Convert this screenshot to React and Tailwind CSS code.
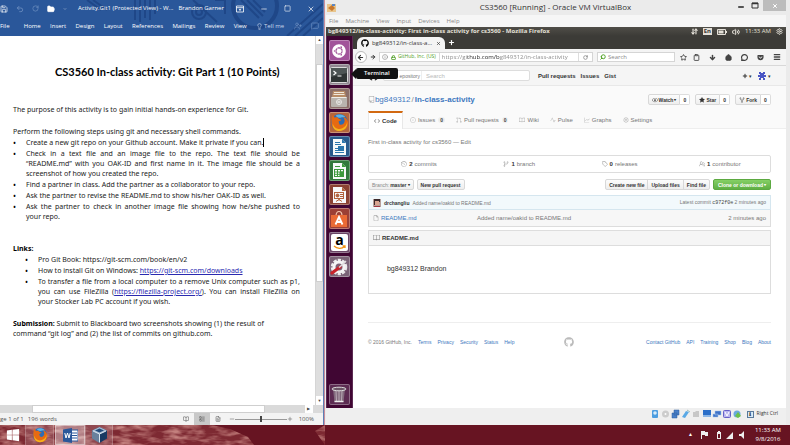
import React from "react";
import { FaUbuntu, FaWindows, FaGithub, FaGetPocket } from "react-icons/fa";
import { GoRepo, GoCode, GoIssueOpened, GoGitPullRequest, GoBook, GoPulse, GoGraph, GoGear, GoHistory, GoGitBranch, GoTag, GoPeople, GoEye, GoStarFill, GoRepoForked, GoFile } from "react-icons/go";
import { Save, Undo2, RotateCw, FolderOpen, ChevronDown, Lightbulb, UserPlus, MessageSquare, X, Square, Minus, Menu, Star, Clipboard, ArrowDown, House, MessageCircle, Info, Lock, ArrowLeft, ArrowRight, Search, Settings, Volume2, ArrowDownUp, BookOpen, LayoutList, FileText, Plus } from "lucide-react";

const ribbonTabs = ["File", "Home", "Insert", "Design", "Layout", "References", "Mailings", "Review", "View"];

function RibbonPattern() {
  return (
    <svg className="absolute right-0 top-0 h-full w-60" viewBox="0 0 240 36" fill="none" stroke="#1f4788" aria-hidden="true">
      <g strokeWidth="2">
        <path d="M4 0l14 10M10 0l14 10M52 0v20M57 0v22M62 0v18M67 0v20M72 0v14" />
        <circle cx="116" cy="12" r="7" />
        <circle cx="116" cy="12" r="3" />
        <path d="M110 0l24 22M132 0h10v14" />
      </g>
      <circle cx="172" cy="6" r="22" strokeWidth="4" />
      <path d="M158 0l18 18M164 0l16 16M170 0l12 12" strokeWidth="2" />
      <path d="M204 36L240 4M212 36l28-25M220 36l20-18" strokeWidth="2" />
    </svg>
  );
}

function WordHeader() {
  return (
    <header className="relative flex h-[36px] shrink-0 flex-col bg-[#2a579a] text-[6px] text-white">
      <RibbonPattern />
      <div className="relative flex h-[17px] items-center pr-2">
        <div className="flex w-[78px] items-center gap-2">
          <button aria-label="Save"><Save size={8} /></button>
          <button aria-label="Undo" className="text-[#7d9cc9]"><Undo2 size={8} /></button>
          <button aria-label="Redo" className="text-[#7d9cc9]"><RotateCw size={7} /></button>
          <button aria-label="Open"><FolderOpen size={8} fill="white" /></button>
          <button aria-label="Customize"><ChevronDown size={4} /></button>
        </div>
        <h1>Activity.Git1 (Protected View) - W...</h1>
        <span className="ml-auto">Brandon Garner</span>
        <div className="ml-3 flex items-center gap-4">
          <button aria-label="Ribbon options">
            <svg width="8" height="8" viewBox="0 0 8 8" fill="none" stroke="white" strokeWidth=".8"><path d="M.5 1h7v6h-7zM.5 2.700h7M4 6V4M3 4.900l1-1 1 1" /></svg>
          </button>
          <button aria-label="Minimize"><Minus size={8} /></button>
          <button aria-label="Maximize"><Square size={7} /></button>
          <button aria-label="Close"><X size={8} /></button>
        </div>
      </div>
      <nav className="relative flex h-[18px] items-center justify-between pr-1">
        {ribbonTabs.map((t) => <button key={t} className="first:mr-[5px]">{t}</button>)}
        <button className="flex items-center gap-px text-[#c9d6ea]"><Lightbulb size={7} />Tell me</button>
        <button aria-label="Share" className="text-[#6f92c4]"><UserPlus size={8} /></button>
        <button aria-label="Comments" className="text-[#6f92c4]"><MessageSquare size={8} /></button>
      </nav>
    </header>
  );
}

function Line({ children }) {
  return <span className="block whitespace-nowrap [text-align-last:justify]">{children}</span>;
}

function Bullet({ children }) {
  return (
    <li className="flex">
      <span className="w-[13px] shrink-0 text-[8px] text-black">•</span>
      <div className="min-w-0 flex-1 whitespace-nowrap">{children}</div>
    </li>
  );
}

function WordDocument() {
  return (
    <article className="min-w-0 flex-1 overflow-hidden bg-white pl-[13px] pr-[15px] pt-[30px] font-['Noto_Sans','Open_Sans',sans-serif] text-[7px] leading-[10px] text-[#222]">
      <h2 className="ml-[42px] whitespace-nowrap font-['Lato',sans-serif] text-[11px] font-bold leading-[12px] text-black">CS3560 In-class activity: Git Part 1 (10 Points)</h2>
      <p className="mt-[27px]">The purpose of this activity is to gain initial hands-on experience for Git.</p>
      <p className="mt-[12px]">Perform the following steps using git and necessary shell commands.</p>
      <ul className="mt-px flex flex-col gap-px">
        <Bullet>Create a new git repo on your Github account. Make it private if you can.<span className="border-l border-black" /></Bullet>
        <Bullet>
          <Line>Check in a text file and an image file to the repo. The text file should be</Line>
          <Line>“README.md” with you OAK-ID and first name in it. The image file should be a</Line>
          screenshot of how you created the repo.
        </Bullet>
        <Bullet>Find a partner in class. Add the partner as a collaborator to your repo.</Bullet>
        <Bullet>Ask the partner to revise the README.md to show his/her OAK-ID as well.</Bullet>
        <Bullet>
          <Line>Ask the partner to check in another image file showing how he/she pushed to</Line>
          your repo.
        </Bullet>
      </ul>
      <h3 className="mt-[22px] font-bold text-black">Links:</h3>
      <ul className="ml-[12px] mt-px flex flex-col gap-px">
        <Bullet>Pro Git Book: https://git-scm.com/book/en/v2</Bullet>
        <Bullet>How to install Git on Windows: <a href="#downloads" className="text-[#2a2ab0] underline">https://git-scm.com/downloads</a></Bullet>
        <Bullet>
          <Line>To transfer a file from a local computer to a remove Unix computer such as p1,</Line>
          <Line>you can use FileZilla (<a href="#filezilla" className="text-[#2a2ab0] underline">https://filezilla-project.org/</a>). You can install FileZilla on</Line>
          your Stocker Lab PC account if you wish.
        </Bullet>
      </ul>
      <p className="mt-[12px]"><b className="text-black">Submission:</b> Submit to Blackboard two screenshots showing (1) the result of<br />command “git log” and (2) the list of commits on github.com.</p>
    </article>
  );
}

function WordWindow() {
  return (
    <section className="flex w-[41%] shrink-0 flex-col border-r border-[#5b7fb5] bg-white font-['Open_Sans',sans-serif]">
      <WordHeader />
      <div className="flex flex-1">
        <WordDocument />
        <div className="flex w-[8px] shrink-0 flex-col border-l border-[#d5d5d5] bg-[#dedede]">
          <span className="h-[8px] bg-white text-center text-[4px] leading-[8px] text-[#444]">▲</span>
          <span className="h-[20px]" />
          <span className="h-[218px] border border-[#cfcfcf] bg-white" />
          <span className="flex-1" />
          <span className="h-[9px] bg-white text-center text-[4px] leading-[9px] text-[#444]">▼</span>
        </div>
      </div>
      <div className="flex h-[8px] shrink-0 items-stretch bg-[#dadada]">
        <span className="w-[10%]" />
        <span className="w-[72%] border border-[#cfcfcf] bg-white" />
        <span className="ml-auto mr-[10px] w-[8px] bg-white text-center text-[4px] leading-[8px] text-[#444]">▶</span>
      </div>
      <footer className="flex h-[12px] shrink-0 items-center bg-[#f3f3f3] pr-[9px] text-[6px] leading-[8px] text-[#555]">
        <span>ge 1 of 1</span>
        <span className="ml-1">196 words</span>
        <div className="ml-auto flex items-center">
          <button aria-label="Read mode" className="px-[5px]"><BookOpen size={6} /></button>
          <button aria-label="Print layout" className="bg-[#c8c8c8] px-[5px] py-[3px]"><LayoutList size={6} /></button>
          <button aria-label="Web layout" className="px-[5px]"><FileText size={6} /></button>
          <Minus size={6} className="ml-[3px]" />
          <input type="range" aria-label="Zoom" defaultValue="50" className="h-[6px] w-[52px] appearance-none bg-[linear-gradient(#999,#999)] bg-[length:100%_1px] bg-center bg-no-repeat [&::-webkit-slider-thumb]:h-[6px] [&::-webkit-slider-thumb]:w-[2px] [&::-webkit-slider-thumb]:appearance-none [&::-webkit-slider-thumb]:bg-[#444]" />
          <Plus size={6} />
          <span className="ml-[6px]">100%</span>
        </div>
      </footer>
    </section>
  );
}

function FirefoxLogo({ size }) {
  return (
    <svg width={size} height={size} viewBox="0 0 20 20" aria-hidden="true">
      <circle cx="10" cy="10" r="9" fill="#2d6cb5" />
      <path d="M6 2.500C9 1 13 1 16 4c-1 1-3 0-5 1-3 0-4-1-5-2.500z" fill="#5cb3e6" />
      <path d="M2 5l1-3 2 3c2-1 4 0 4 1l3 1c0 1-2 1-3 2l1 3c2 1 4 0 5-2 1-2 0-4-1-6 3 1 4 3 5 5 1 6-3 10-9 10C4 19 0 14 2 5z" fill="#e66a12" />
      <path d="M3 11c1 5 6 7 10 5 3-1 5-4 5-7 1 6-3 10-8 10-5 0-8-4-7-8z" fill="#f6b21b" />
    </svg>
  );
}

function FilesIcon() {
  return (
    <svg width="18" height="18" viewBox="0 0 18 18">
      <path d="M3 1h12l1 6H2z" fill="#b98d68" /><path d="M4 2.500h10M3.500 4.500h11" stroke="#f0e8dc" />
      <rect x="1" y="7" width="16" height="10" rx="1" fill="#b9b4ae" /><path d="M1.500 7.500h15" stroke="#efede9" />
      <circle cx="9" cy="12" r="2.500" fill="none" stroke="#e9e7e4" /><path d="M7.500 12h3" stroke="#fff" />
    </svg>
  );
}

function TerminalIcon() {
  return (
    <svg width="18" height="18" viewBox="0 0 18 18">
      <rect x=".5" y="1.500" width="17" height="15" rx="1" fill="#2e3434" stroke="#d9d9d9" />
      <path d="M1 2h16v5L1 11z" fill="#4d5555" /><path d="M3.500 5l2.500 2-2.500 2M7.500 10h4" stroke="#fff" fill="none" strokeWidth="1.200" />
    </svg>
  );
}

function OfficeIcon({ color, kind }) {
  return (
    <svg width="18" height="18" viewBox="0 0 18 18">
      <path d="M3 1h9l4 4v12H3z" fill="#f7f9fa" /><path d="M12 1l4 4h-4z" fill={color} />
      {kind === "writer" && <g stroke={color}><path d="M5 4.500h5M5 6.500h6M5 14.500h9M5 12.500h3M5 10.500h3" /><rect x="8.500" y="8.500" width="5" height="4" fill={color} /></g>}
      {kind === "calc" && <g stroke={color} fill="none"><rect x="4.500" y="7.500" width="9" height="7" /><path d="M4.500 10h9M4.500 12.300h9M7.500 7.500v7M10.500 7.500v7M5 4.500h5" /><path d="M10 10h3v4h-3z" fill={color} /></g>}
      {kind === "impress" && <g stroke={color} fill="none"><rect x="4.500" y="6.500" width="9" height="6" /><circle cx="7.500" cy="9.500" r="1.500" fill={color} /><path d="M10 8.500h3M10 10.500h3M9 12.500v2M6 15.500l3-2 3 2" /></g>}
    </svg>
  );
}

function SoftwareIcon() {
  return (
    <svg width="18" height="18" viewBox="0 0 18 18">
      <path d="M6 6c0-6 6-6 6 0" fill="none" stroke="#f3c7ae" strokeWidth="1.200" />
      <path d="M1 5h16v12H1z" fill="#ea6a35" /><path d="M5.500 14.500L9 7l3.500 7.500M6 12h6" fill="none" stroke="#fff" strokeWidth="1.800" />
    </svg>
  );
}

function AmazonIcon() {
  return (
    <span className="flex size-[17px] flex-col items-center rounded-xs bg-white text-[14px] font-bold leading-[11px] text-black">
      a
      <svg width="13" height="5" viewBox="0 0 13 5" fill="none" stroke="#f29111"><path d="M1 1c3 3 8 3 10.500.5M9.500.8h2.500v2.200" strokeWidth="1.300" /></svg>
    </span>
  );
}

function SettingsIcon() {
  return (
    <svg width="18" height="18" viewBox="0 0 18 18">
      <circle cx="9" cy="9" r="6.500" fill="none" stroke="#ececec" strokeWidth="3.500" strokeDasharray="3 1.100" />
      <circle cx="9" cy="9" r="5" fill="none" stroke="#f5f5f5" strokeWidth="3" />
      <path d="M2 15l8-6" stroke="#c9232b" strokeWidth="3.200" strokeLinecap="round" /><path d="M9 9.500l4-3.500 3-3" stroke="#ddd" strokeWidth="1.600" />
    </svg>
  );
}

function TrashIcon() {
  return (
    <svg width="18" height="18" viewBox="0 0 18 18">
      <path d="M3 3h12l-1.500 13h-9z" fill="#8c7a88" opacity=".8" /><path d="M6 5l.5 10M9 5v10M12 5l-.5 10" stroke="#b8a9b5" />
      <ellipse cx="9" cy="3" rx="7" ry="1.800" fill="#6b5466" stroke="#ddd" /><path d="M4.500 15.500h9" stroke="#eee" strokeWidth="1.500" />
    </svg>
  );
}

const launcher = [
  { name: "Dash", bg: "bg-[#a1539a]", icon: <FaUbuntu size={14} color="white" /> },
  { name: "Terminal", bg: "bg-[#8f8790]", icon: <TerminalIcon />, tip: true },
  { name: "Files", bg: "bg-[#8c6f69]", icon: <FilesIcon /> },
  { name: "Firefox", bg: "bg-[#b5653c]", icon: <FirefoxLogo size={19} /> },
  { name: "Writer", bg: "bg-[#285a8c]", icon: <OfficeIcon color="#2a76ad" kind="writer" /> },
  { name: "Calc", bg: "bg-[#32793c]", icon: <OfficeIcon color="#3c9a3c" kind="calc" /> },
  { name: "Impress", bg: "bg-[#8b4233]", icon: <OfficeIcon color="#b3623c" kind="impress" /> },
  { name: "Software", bg: "bg-[#9c3f35]", icon: <SoftwareIcon /> },
  { name: "Amazon", bg: "bg-[#6a4566]", icon: <AmazonIcon /> },
  { name: "System settings", bg: "bg-[#7a6377]", icon: <SettingsIcon /> },
];

function Launcher() {
  return (
    <nav className="flex w-[27px] shrink-0 flex-col items-center gap-[3px] border-x border-[#5b2a52] bg-[#400633] pb-[3px] pt-[4px]">
      {launcher.map((l) => (
        <div key={l.name} className="relative">
          <button aria-label={l.name} className={"flex size-[21px] items-center justify-center rounded-xs border border-white/30 " + l.bg}>{l.icon}</button>
          {l.tip && (
            <span role="tooltip" className="absolute left-[22px] top-[4px] z-10 flex items-center">
              <span className="border-y-[5px] border-r-[5px] border-y-transparent border-r-[#111]" />
              <span className="rounded-xs bg-[#111] px-[8px] text-[6px] leading-[11px] font-semibold text-white">Terminal</span>
            </span>
          )}
        </div>
      ))}
      <button aria-label="Trash" className="mt-auto flex size-[21px] items-center justify-center rounded-xs border border-white/30 bg-[#5c2b52]"><TrashIcon /></button>
    </nav>
  );
}

function FirefoxToolbar() {
  return (
    <>
      <div className="flex h-[13px] shrink-0 items-end bg-[#3c3b37] pl-[4px]">
        <div className="flex h-[12px] w-[88px] items-center gap-[3px] rounded-t-md bg-[#f4f4f4] px-[4px] text-[6px] text-[#333]">
          <FaGithub size={8} className="shrink-0 text-black" />
          <span className="min-w-0 whitespace-nowrap">bg849312/in-class-a...</span>
          <button aria-label="Close tab" className="ml-auto"><X size={5} strokeWidth={3} /></button>
        </div>
        <button aria-label="New tab" className="ml-[3px] mb-[3px] text-white"><Plus size={7} strokeWidth={4} /></button>
      </div>
      <div className="flex h-[17px] shrink-0 items-center border-b border-[#d8d8d8] bg-[#f4f4f4] pl-[2px] pr-[5px] text-[6px] text-[#777]">
        <button aria-label="Back" className="flex size-[12px] items-center justify-center rounded-full border border-[#bbb] bg-white text-[#333]"><ArrowLeft size={7} strokeWidth={4} /></button>
        <button aria-label="Forward" className="flex h-[10px] w-[12px] items-center justify-center text-[#333]"><ArrowRight size={6} strokeWidth={4} /></button>
        <div className="flex h-[10px] flex-1 items-center border border-[#d5d5d5] bg-white pl-[2px]">
          <Info size={6} />
          <Lock size={5} strokeWidth={4} className="ml-[3px] text-[#4f9e24]" />
          <span className="ml-[2px] whitespace-nowrap text-[5px] text-[#4f9e24]">GitHub, Inc. (US)</span>
          <input aria-label="Address" defaultValue="https://github.com/bg849312/in-class-activity" className="ml-[3px] w-0 min-w-0 flex-1 border-l border-[#ddd] bg-[linear-gradient(to_right,#888_27px,#222_27px,#222_60px,#888_60px)] bg-clip-text pl-[2px] text-transparent outline-none" />
          <button aria-label="Reload" className="flex h-full w-[14px] items-center justify-center border-l border-[#ddd]"><RotateCw size={5} strokeWidth={3} /></button>
        </div>
        <label className="ml-[4px] flex h-[10px] w-[78px] items-center border border-[#d5d5d5] bg-white pl-[2px]">
          <Search size={6} strokeWidth={4} className="-scale-x-100 text-[#57a52c]" />
          <input aria-label="Search the web" placeholder="Search" className="ml-[2px] w-0 flex-1 outline-none placeholder:text-[#888]" />
        </label>
        <div className="ml-[5px] flex items-center gap-[9px] text-[#444]">
          <button aria-label="Bookmark"><Star size={7} strokeWidth={3} /></button>
          <button aria-label="Library" className="-ml-[3px]"><Clipboard size={7} strokeWidth={3} /></button>
          <button aria-label="Downloads"><ArrowDown size={7} strokeWidth={5} /></button>
          <button aria-label="Home"><House size={7} strokeWidth={3} fill="#444" /></button>
          <button aria-label="Chat"><MessageCircle size={7} strokeWidth={4} /></button>
          <button aria-label="Pocket"><FaGetPocket size={7} /></button>
          <button aria-label="Menu"><Menu size={8} strokeWidth={4} /></button>
        </div>
      </div>
    </>
  );
}

const btn = "flex h-[11px] items-center gap-px border border-[#d8d8d8] bg-gradient-to-b from-[#fcfcfc] to-[#eee] px-[3px] text-[5px] font-bold text-[#333] whitespace-nowrap";

function CountButton({ icon, label, caret }) {
  return (
    <div className="flex">
      <button className={btn + " rounded-l-xs"}>{icon}{label}{caret && <span className="text-[4px]">▾</span>}</button>
      <a href="#count" className="flex h-[11px] w-[10px] items-center justify-center rounded-r-xs border border-l-0 border-[#ddd] bg-white text-[5px] font-bold text-[#333]">0</a>
    </div>
  );
}

const repoTabs = [
  [GoIssueOpened, "Issues", true],
  [GoGitPullRequest, "Pull requests", true],
  [GoBook, "Wiki", false],
  [GoPulse, "Pulse", false],
  [GoGraph, "Graphs", false],
  [GoGear, "Settings", false],
];

const stats = [
  [GoHistory, "2", "commits"],
  [GoGitBranch, "1", "branch"],
  [GoTag, "0", "releases"],
  [GoPeople, "1", "contributor"],
];

function GitHubPage() {
  return (
    <div className="flex flex-1 flex-col bg-white font-['Liberation_Sans',Arial,sans-serif] text-[6px] leading-[8px] text-[#777]">
      <header className="flex h-[20px] shrink-0 items-center border-b border-[#e8e8e8] bg-[#f5f5f5] px-[15px] text-[#333]">
        <FaGithub size={11} />
        <div className="ml-[4px] flex h-[11px] w-[147px] rounded-xs border border-[#ddd] bg-white">
          <span className="flex w-[38px] items-center justify-end whitespace-nowrap border-r border-[#eee] pr-px text-[5px] text-[#777]">epository</span>
          <input aria-label="Search GitHub" placeholder="Search" className="w-0 flex-1 pl-[4px] outline-none placeholder:text-[#bbb]" />
        </div>
        <nav className="ml-[8px] flex gap-[5px] font-bold">
          <a href="#pulls">Pull requests</a><a href="#issues">Issues</a><a href="#gist">Gist</a>
        </nav>
        <button aria-label="Create new" className="ml-auto flex items-center gap-px"><Plus size={6} strokeWidth={4} /><span className="text-[5px]">▾</span></button>
        <button aria-label="Profile" className="ml-[6px] flex items-center gap-[2px]">
          <svg width="8" height="8" viewBox="0 0 8 8" fill="#4a55c4"><path d="M1 0h2v1h2V0h2v2H6v1h2v2H6v1h1v2H5V6H3v2H1V6h1V5H0V3h2V2H1z" /></svg>
          <span className="text-[5px]">▾</span>
        </button>
      </header>

      <section className="flex h-[43px] shrink-0 flex-col border-b border-[#eee] bg-[#fafafa] px-[15px]">
        <div className="flex items-center pt-[8px]">
          <GoRepo size={7} className="text-[#999]" />
          <h1 className="flex gap-px text-[8px] leading-[11px] text-[#4078c0]"><a href="#owner">bg849312</a><span className="text-[#888]">/</span><a href="#repo" className="font-bold">In-class-activity</a></h1>
          <div className="ml-auto flex gap-[5px]">
            <CountButton icon={<GoEye size={6} />} label="Watch" caret />
            <CountButton icon={<GoStarFill size={6} />} label="Star" />
            <CountButton icon={<GoRepoForked size={6} />} label="Fork" />
          </div>
        </div>
        <nav className="mt-auto flex h-[17px] items-center gap-[11px]">
          <a href="#code" className="relative -mb-px flex h-[18px] w-[35px] items-center justify-center gap-[2px] border border-b-0 border-t-2 border-[#e8e8e8] border-t-[#d26911] bg-white font-bold text-[#333] -mr-[4px]"><GoCode size={6} />Code</a>
          {repoTabs.map(([Icon, label, count]) => (
            <a href="#tab" key={label} className="flex items-center gap-[2px]"><Icon size={6} className="text-[#aaa]" />{label}{count && <b className="ml-px rounded-full bg-[#eee] px-[2px] text-[5px] leading-[6px] text-[#444]">0</b>}</a>
          ))}
        </nav>
      </section>

      <main className="flex-1 px-[15px] pt-[9px]">
        <p>First in-class activity for cs3560 — <a href="#edit">Edit</a></p>
        <ul className="mt-[9px] grid h-[18px] grid-cols-4 items-center rounded-xs border border-[#ddd]">
          {stats.map(([Icon, n, label]) => (
            <li key={label} className="flex items-center justify-center gap-[2px]"><Icon size={6} className="text-[#888]" /><b className="text-[#333]">{n}</b>{label}</li>
          ))}
        </ul>
        <div className="mt-[6px] flex">
          <button className={btn + " rounded-xs"}><span className="font-normal text-[#888]">Branch:</span>master <span className="text-[4px]">▾</span></button>
          <button className={btn + " ml-[3px] rounded-xs"}>New pull request</button>
          <button className={btn + " ml-auto rounded-l-xs"}>Create new file</button>
          <button className={btn + " -ml-px"}>Upload files</button>
          <button className={btn + " -ml-px rounded-r-xs"}>Find file</button>
          <button className="ml-[3px] flex h-[11px] items-center gap-px rounded-xs border border-[#5ca941] bg-gradient-to-b from-[#85cf66] to-[#60b044] px-[4px] text-[5px] font-bold text-white">Clone or download <span className="text-[4px]">▾</span></button>
        </div>
        <div className="mt-[5px] flex h-[15px] items-center gap-[3px] border border-[#d5e6ef] bg-[#f2f9fc] px-[4px] text-[5px]">
          <svg width="8" height="8" viewBox="0 0 8 8"><path fill="#b8a09b" d="M0 0h8v8H0z" /><path fill="#3b2a2c" d="M1 0h6v3H1zM1 2h1v4H1z" /><path fill="#d9a692" d="M2 2h4v4H2z" /><path fill="#a33742" d="M1 7h6v1H1z" /></svg>
          <a href="#author" className="font-bold text-[#333]">drchangliu</a>
          <a href="#message">Added name/oakid to README.md</a>
          <span className="ml-auto">Latest commit <a href="#hash" className="font-['Liberation_Mono',monospace] text-[#444]">c972f0e</a> 2 minutes ago</span>
        </div>
        <table className="w-full border border-t-0 border-[#ddd] bg-[#f7f7f7]">
          <tbody><tr className="h-[16px]">
            <td className="w-[27%] pl-[4px]"><a href="#file" className="flex items-center gap-[2px] text-[#4078c0]"><GoFile size={6} className="text-[#888]" />README.md</a></td>
            <td>Added name/oakid to README.md</td>
            <td className="pr-[4px] text-right">2 minutes ago</td>
          </tr></tbody>
        </table>
        <article className="mt-[3px] border border-[#ddd]">
          <h2 className="flex h-[15px] items-center gap-[2px] border-b border-[#ddd] bg-[#f5f5f5] px-[4px] font-bold text-[#333]"><GoBook size={7} className="text-[#777]" />README.md</h2>
          <p className="flex h-[47px] items-center px-[18px] text-[7px] text-[#333]">bg849312 Brandon</p>
        </article>
        <footer className="mt-[28px] grid grid-cols-[1fr_auto_1fr] items-center border-t border-[#eee] pt-[14px] text-[5px] text-[#4078c0]">
          <div className="flex gap-[6px]"><span className="text-[#777]">© 2016 GitHub, Inc.</span>{["Terms", "Privacy", "Security", "Status", "Help"].map((t) => <a href="#footer" key={t}>{t}</a>)}</div>
          <FaGithub size={10} className="text-[#bbb]" />
          <div className="flex justify-end gap-[6px]">{["Contact GitHub", "API", "Training", "Shop", "Blog", "About"].map((t) => <a href="#footer" key={t}>{t}</a>)}</div>
        </footer>
      </main>
    </div>
  );
}

function VmStatusIcons() {
  return (
    <svg width="94" height="10" viewBox="0 0 94 10" aria-hidden="true">
      <rect x="1" y="1" width="6" height="8" rx="1" fill="#4d9de0" /><circle cx="4" cy="4" r="1.800" fill="#d6ebfa" />
      <circle cx="14.500" cy="5" r="3.500" fill="#ccc" /><circle cx="14.500" cy="5" r="1" fill="#fff" />
      <path d="M23 1h5v5h-5zM21 4h5v5h-5z" fill="#4a80c8" stroke="#2e5d9e" strokeWidth=".5" />
      <path d="M31 8l4-6 3 1-4 6z" fill="#5aa9e6" /><path d="M36 1l3 2" stroke="#9bb" />
      <path d="M42 3h2l1-1h3v6h-6z" fill="#c7c7c7" />
      <path d="M52 1h8v5h-8z" fill="#2b6fc9" /><path d="M52 6h8v2h-8z" fill="#8db7e6" />
      <path d="M64 2h6v4h-6zM62 5h5v3h-5z" fill="#3e71c7" stroke="#9fc0ea" strokeWidth=".5" />
      <rect x="72.500" y="1.500" width="7" height="7" rx="1" fill="#b9b6ef" stroke="#6660c8" /><path d="M74 3l2 4 2-4" stroke="#fff" fill="none" />
      <circle cx="86" cy="5" r="3.500" fill="#6aa9df" /><path d="M84 7l3-4 3 4-3 2z" fill="#6cc04a" />
    </svg>
  );
}

function VmWindow() {
  return (
    <section className="flex min-w-0 flex-1 flex-col bg-[#ebebeb] pl-px pr-[4px] font-['Open_Sans',sans-serif]">
      <header className="flex h-[15px] shrink-0 items-start">
        <svg width="9" height="9" viewBox="0 0 9 9" className="mt-[3px] ml-px shrink-0"><path d="M0 1h9v8H0z" fill="#e8c58c" /><path d="M1 5l4-3 3 3-3 3z" fill="#c7762a" /><path d="M5 1h3v2H5z" fill="#5b87c5" /></svg>
        <h1 className="flex-1 pl-[38px] pt-px text-center text-[8px] leading-[12px] text-[#333]">CS3560 [Running] - Oracle VM VirtualBox</h1>
        <div className="flex items-start text-[#222]">
          <button aria-label="Minimize VM" className="mr-[6px] mt-[3px]"><Minus size={8} strokeWidth={4} /></button>
          <button aria-label="Maximize VM" className="mr-[4px] mt-[2px]"><svg width="8" height="8" viewBox="0 0 8 8"><path d="M1 1h6v5H1z" fill="none" stroke="#333" /><path d="M1 1.500h6" stroke="#333" strokeWidth="1.500" /></svg></button>
          <button aria-label="Close VM" className="flex h-[11px] w-[23px] items-center justify-center bg-[#bcbcbc] text-white"><X size={6} strokeWidth={4} /></button>
        </div>
      </header>
      <nav className="flex h-[12px] shrink-0 items-center gap-[7px] bg-[#f6f6f6] pl-[3px] text-[6px] text-[#888]">
        {["File", "Machine", "View", "Input", "Devices", "Help"].map((t) => <button key={t}>{t}</button>)}
      </nav>
      <div className="flex h-[9px] shrink-0 items-center bg-gradient-to-b from-[#504e48] to-[#3c3b37] pl-[2px] pr-[3px] text-[6px] leading-[9px] text-[#e4e0d8]">
        <span className="font-bold">bg849312/in-class-activity: First in-class activity for cs3560 - Mozilla Firefox</span>
        <div className="ml-auto flex items-center gap-[5px]">
          <ArrowDownUp size={7} strokeWidth={4} />
          <span className="bg-[#e4e0d8] px-px text-[6px] leading-[7px] font-bold text-[#3c3b37]">En</span>
          <svg width="10" height="6" viewBox="0 0 10 6"><path d="M.5.5h8v5h-8z" fill="none" stroke="#e4e0d8" /><path d="M1.500 1.500h5v3h-5zM9 2h1v2H9z" fill="#e4e0d8" /></svg>
          <Volume2 size={8} strokeWidth={3} />
          <span>11:33 AM</span>
          <Settings size={7} strokeWidth={3} />
        </div>
      </div>
      <div className="flex flex-1">
        <Launcher />
        <div className="flex min-w-0 flex-1 flex-col">
          <FirefoxToolbar />
          <GitHubPage />
        </div>
      </div>
      <footer className="flex h-[17px] shrink-0 items-center justify-end gap-[2px] bg-[#efefef] pb-[6px] pr-[8px] pt-[1px] text-[5px] text-[#333]">
        <VmStatusIcons />
        <span className="flex size-[7px] items-center justify-center border border-[#58799a] bg-[#dce9f5] leading-none">⬇</span>
        <span className="ml-px">Right Ctrl</span>
      </footer>
    </section>
  );
}

function TaskbarClouds() {
  return (
    <svg className="absolute inset-y-0 left-0 h-full w-[325px]" viewBox="0 0 325 20" fill="none" aria-hidden="true">
      <defs>
        <filter id="clouds" x="0" y="0" width="100%" height="100%">
          <feTurbulence type="fractalNoise" baseFrequency=".06 .18" numOctaves="3" seed="7" />
          <feColorMatrix values="0 0 0 0 .55 0 0 0 0 .22 0 0 0 0 .21 2.400 0 0 0 -.95" />
        </filter>
        <clipPath id="cloud-edge"><path d="M0 0h212l18 4 18 8 6 8H0zM325 0l-10 6 10 14z" /></clipPath>
      </defs>
      <g clipPath="url(#cloud-edge)">
        <path d="M0 0h325v20H0z" fill="#7d2932" />
        <path d="M0 0h325v20H0z" fill="#7d2932" filter="url(#clouds)" />
      </g>
    </svg>
  );
}

function Taskbar() {
  return (
    <footer className="relative flex h-[20px] shrink-0 items-stretch overflow-hidden bg-[#671422] font-['Open_Sans',sans-serif] text-white">
      <TaskbarClouds />
      <button aria-label="Start" className="relative flex w-[25px] items-center justify-center"><FaWindows size={14} /></button>
      <button aria-label="Firefox" className="relative flex w-[29px] items-center justify-center border-x border-white/20 bg-white/15"><FirefoxLogo size={16} /></button>
      <button aria-label="Word" className="relative ml-px flex w-[30px] items-center justify-center border border-white/40 bg-white/40">
        <svg width="15" height="15" viewBox="0 0 15 15"><path d="M7 2h8v11H7z" fill="#fff" stroke="#2b579a" /><path d="M9 5h5M9 7.500h5M9 10h5" stroke="#2b579a" /><path d="M0 1.500L9 0v15l-9-1.500z" fill="#2b579a" /><path d="M1.800 5l1.200 5 1.500-5L6 10l1.200-5" fill="none" stroke="#fff" /></svg>
      </button>
      <button aria-label="VirtualBox" className="relative flex w-[28px] items-center justify-center border-x border-white/20 bg-white/15">
        <svg width="15" height="16" viewBox="0 0 15 16"><path d="M7.500 0L15 3.500v8L7.500 16 0 11.500v-8z" fill="#173a63" /><path d="M7.500 0L15 3.500 7.500 7 0 3.500z" fill="#a6bcd3" /><path d="M7.500 7v9L0 11.500v-8z" fill="#e5edf5" opacity=".4" /><path d="M3 3.500l4.500-2 4.500 2-4.500 2z" fill="#244d7d" /><path d="M7.500 7v8.500M1 4l6.500 3L14 4" stroke="#dce6f0" fill="none" /></svg>
      </button>
      <div className="relative ml-auto flex items-center gap-[4px] pr-[9px]">
        <span className="text-[5px]">▲</span>
        <svg width="54" height="10" viewBox="0 0 54 10" fill="#eee" aria-hidden="true"><path d="M4 1h1v8H4zM5 1h3v1h3v4H8V5H5zM20 2h1V1h2v1h1v7h-4zM29 9h7V2z" /><path d="M21 4h2v4h-2z" fill="#671422" /><path d="M42 4h2l3-3v8l-3-3h-2z" /></svg>
        <time className="flex flex-col text-center text-[6px] leading-[9px]"><span>11:33 AM</span><span>9/8/2016</span></time>
      </div>
    </footer>
  );
}

export default function App() {
  return (
    <div className="flex min-h-screen flex-col overflow-hidden bg-[#c98f9d]">
      <div className="flex flex-1 gap-px">
        <WordWindow />
        <VmWindow />
      </div>
      <Taskbar />
    </div>
  );
}
